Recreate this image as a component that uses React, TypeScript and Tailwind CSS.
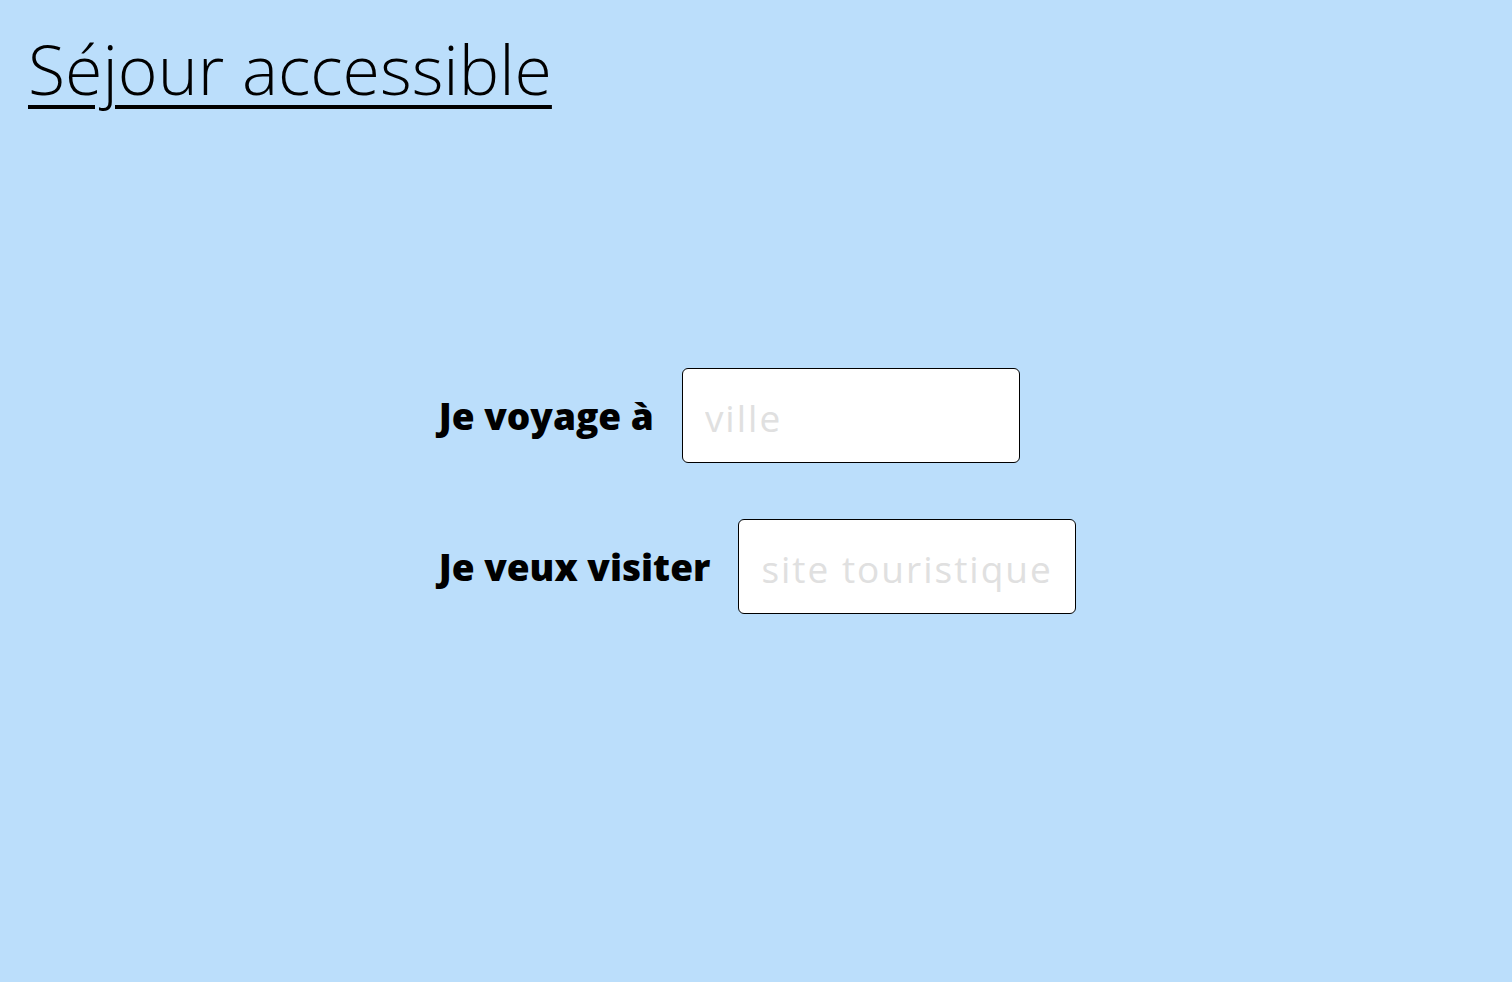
import React from 'react';

const Field: React.FC<{ label: string; placeholder: string }> = ({ label, placeholder }) => (
  <div className="flex items-center gap-[28px]">
    <label className="text-[37px] font-extrabold text-black">{label}</label>
    <input
      type="text"
      placeholder={placeholder}
      className="h-[95px] w-[338px] rounded-md border border-black bg-white px-[22px] pt-[4px] text-[37px] tracking-[2px] text-black outline-none placeholder:text-[#e0e0e0]"
    />
  </div>
);

export default function App() {
  return (
    <div className="flex h-screen flex-col bg-[#bbdefb] font-['Open_Sans',sans-serif]">
      <header className="h-[120px] px-[28px] pt-[35px]">
        <h1 className="text-[68px] leading-none font-light text-black underline decoration-[4px] underline-offset-[10px]">
          Séjour accessible
        </h1>
      </header>
      <main className="flex flex-1 items-center justify-center pb-[120px]">
        <div className="flex flex-col gap-[56px] pl-[3px]">
          <Field label="Je voyage à" placeholder="ville" />
          <Field label="Je veux visiter" placeholder="site touristique" />
        </div>
      </main>
    </div>
  );
}
